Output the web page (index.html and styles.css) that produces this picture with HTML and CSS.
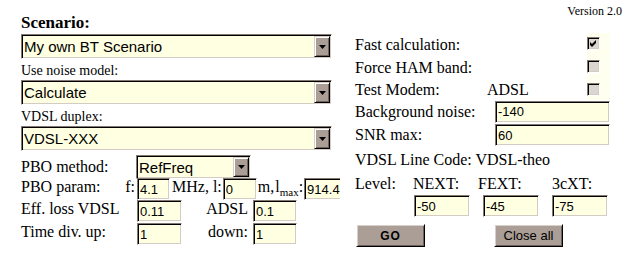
FILE: index.html
```html
<!DOCTYPE html>
<html>
<head>
<meta charset="utf-8">
<title>Scenario</title>
<link rel="stylesheet" href="styles.css">
</head>
<body>
<div class="page">
  <div class="left">
    <div class="title">Scenario:</div>
    <div class="combo wide"><select><option>My own BT Scenario</option></select><span class="arrow"><svg width="7" height="4" viewBox="0 0 7 4"><path d="M0 0h7L3.5 4z"/></svg></span></div>
    <div class="lbl">Use noise model:</div>
    <div class="combo wide"><select><option>Calculate</option></select><span class="arrow"><svg width="7" height="4" viewBox="0 0 7 4"><path d="M0 0h7L3.5 4z"/></svg></span></div>
    <div class="lbl">VDSL duplex:</div>
    <div class="combo wide"><select><option>VDSL-XXX</option></select><span class="arrow"><svg width="7" height="4" viewBox="0 0 7 4"><path d="M0 0h7L3.5 4z"/></svg></span></div>
    <div class="pbo">
      <div class="pl r1">PBO method:</div>
      <div class="combo mid"><select><option>RefFreq</option></select><span class="arrow"><svg width="7" height="4" viewBox="0 0 7 4"><path d="M0 0h7L3.5 4z"/></svg></span></div>
      <div class="pl param"><span>PBO param:</span><span>f:</span></div>
      <div class="inline">
        <input class="in w33" value="4.1">
        <span class="t1">MHz, l:</span>
        <input class="in w34" value="0">
        <span class="t2">m,</span>
        <span class="t3">l<sub>max</sub>:</span>
        <input class="in w56" value="914.4">
      </div>
      <div class="pl">Eff. loss VDSL</div>
      <input class="in w45 cell" value="0.11">
      <div class="rl">ADSL</div>
      <input class="in w44 cell" value="0.1">
      <div class="pl">Time div. up:</div>
      <input class="in w45 cell" value="1">
      <div class="rl">down:</div>
      <input class="in w44 cell" value="1">
    </div>
  </div>
  <div class="right">
    <div class="version">Version 2.0</div>
    <div class="opts">
      <div class="ol span2">Fast calculation:</div>
      <div class="cbcell"><span class="cb"><svg width="7" height="7" viewBox="0 0 7 7"><path d="M0 2L2 4L6 0V3L2 7L0 5Z"/></svg></span></div>
      <div class="ol span2">Force HAM band:</div>
      <div class="cbcell"><span class="cb"></span></div>
      <div class="ol r3">Test Modem:</div>
      <div class="ol r3">ADSL</div>
      <div class="cbcell"><span class="cb"></span></div>
    </div>
    <div class="frow"><span class="flab">Background noise:</span><input class="in w115" value="-140"></div>
    <div class="frow snr"><span class="flab">SNR max:</span><input class="in w115" value="60"></div>
    <div class="code">VDSL Line Code: VDSL-theo</div>
    <div class="levels"><span class="c1">Level:</span><span class="c2">NEXT:</span><span class="c3">FEXT:</span><span>3cXT:</span></div>
    <div class="xt">
      <input class="in w56" value="-50">
      <input class="in w56" value="-45">
      <input class="in w56" value="-75">
    </div>
    <div class="btns">
      <button class="btn go">GO</button>
      <button class="btn close">Close all</button>
    </div>
  </div>
</div>
</body>
</html>
```
FILE: styles.css
```css
* { box-sizing: border-box; }
body {
  margin: 0;
  background: #fff;
  color: #000;
  font-family: "Liberation Serif", "Times New Roman", serif;
}
.page { display: flex; }
.left {
  width: 340px;
  padding: 13px 0 0 21px;
  overflow: hidden;
}
.title {
  font-weight: bold;
  font-size: 17px;
  line-height: 20px;
  height: 21px;
}
.combo {
  display: flex;
  height: 25px;
  background: #ffffe1;
  border: 1px solid;
  border-color: #857870 #fff #fff #857870;
  box-shadow: inset 1px 1px 0 #000, inset -1px -1px 0 #d4ccc4;
  padding: 1px;
}
.combo.wide { width: 311px; }
.combo select {
  flex: 1;
  min-width: 0;
  -webkit-appearance: none;
  appearance: none;
  border: 0;
  border-radius: 0;
  background: transparent;
  font: 15px "Liberation Sans", Arial, sans-serif;
  color: #000;
  padding: 0 0 0 1px;
  margin: 0;
  height: 21px;
  outline: none;
}
.arrow {
  width: 16px;
  height: 21px;
  background: #aa9e96;
  border: 1px solid;
  border-color: #d8d0c8 #000 #000 #d8d0c8;
  box-shadow: inset 1px 1px 0 #fff, inset -1px -1px 0 #6e625a;
  display: flex;
  align-items: center;
  justify-content: center;
}
.arrow svg { display: block; }
.lbl {
  font-size: 14px;
  line-height: 19px;
  height: 21px;
  padding-top: 2px;
}
.pbo {
  display: grid;
  grid-template-columns: 116px 46px 70px 1fr;
  grid-template-rows: 23px 22px 23px 23px;
  margin-top: 4px;
  font-size: 16px;
}
.pl { grid-column: 1; line-height: 18px; white-space: nowrap; }
.r1 { line-height: 23px; }
.combo.mid {
  grid-column: 2 / span 2;
  width: 115px;
  height: 24px;
  margin-left: -1px;
  justify-self: start;
}
.combo.mid select { height: 20px; }
.combo.mid .arrow { height: 20px; }
.param {
  display: flex;
  justify-content: space-between;
  padding-right: 2px;
}
.inline {
  grid-column: 2 / span 3;
  display: flex;
  align-items: flex-start;
  line-height: 18px;
  white-space: nowrap;
}
.t1 { margin: 0 1px 0 2px; }
.t2 { margin-left: 1px; }
.t3 { margin: 0 1px 0 1px; }
.t3 sub { font-size: 11px; vertical-align: -4px; }
.rl {
  text-align: right;
  padding-right: 5px;
  line-height: 18px;
}
.in {
  height: 22px;
  border: 1px solid;
  border-color: #857870 #fff #fff #857870;
  box-shadow: inset 1px 1px 0 #000, inset -1px -1px 0 #d4ccc4;
  background: #ffffe1;
  font: 13px "Liberation Sans", Arial, sans-serif;
  color: #000;
  padding: 0 1px 0 2px;
  margin: 0;
  border-radius: 0;
  outline: none;
}
.cell { justify-self: start; align-self: start; }
.w33 { width: 33px; }
.w34 { width: 34px; }
.w44 { width: 44px; }
.w45 { width: 45px; }
.w56 { width: 56px; flex: none; }
.w115 { width: 115px; }

.right {
  width: 267px;
  margin-left: 15px;
  font-size: 16px;
}
.version {
  font-size: 12px;
  line-height: 14px;
  margin-top: 4px;
  text-align: right;
}
.opts {
  display: grid;
  grid-template-columns: 132px 100px 23px;
  grid-template-rows: 23px 23px 21px;
  margin-top: 15px;
  width: 255px;
}
.ol { line-height: 23px; white-space: nowrap; }
.ol.r3 { line-height: 21px; }
.span2 { grid-column: span 2; }
.cbcell { background: #fffff0; }
.cb {
  display: block;
  width: 13px;
  height: 13px;
  margin-top: 4px;
  padding: 2px;
  border: 1px solid;
  border-color: #857870 #fff #fff #857870;
  box-shadow: inset 1px 1px 0 #000, inset -1px -1px 0 #d4ccc4;
  background: #dcd6d0;
}
.cb svg { display: block; }
.frow {
  display: flex;
  align-items: center;
  width: 255px;
  height: 23px;
}
.frow.snr { height: 24px; }
.flab { width: 140px; line-height: 22px; white-space: nowrap; }
.code { line-height: 26px; white-space: nowrap; }
.levels { display: flex; line-height: 21px; }
.c1 { width: 58px; }
.c2 { width: 65px; }
.c3 { width: 74px; }
.xt {
  display: flex;
  gap: 13px;
  padding-left: 59px;
  margin-top: 1px;
}
.btns { display: flex; margin-top: 7px; }
.btn {
  width: 69px;
  height: 23px;
  padding: 0;
  background: #aa9e96;
  border: 1px solid;
  border-color: #fff #000 #000 #fff;
  box-shadow: inset 1px 1px 0 #d8d0c8, inset -1px -1px 0 #6e625a;
  border-radius: 0;
  font: 13px "Liberation Sans", Arial, sans-serif;
  color: #000;
}
.go {
  margin-left: 1px;
  font-weight: bold;
  font-size: 12px;
  letter-spacing: 1px;
}
.close { margin-left: 69px; }
```
